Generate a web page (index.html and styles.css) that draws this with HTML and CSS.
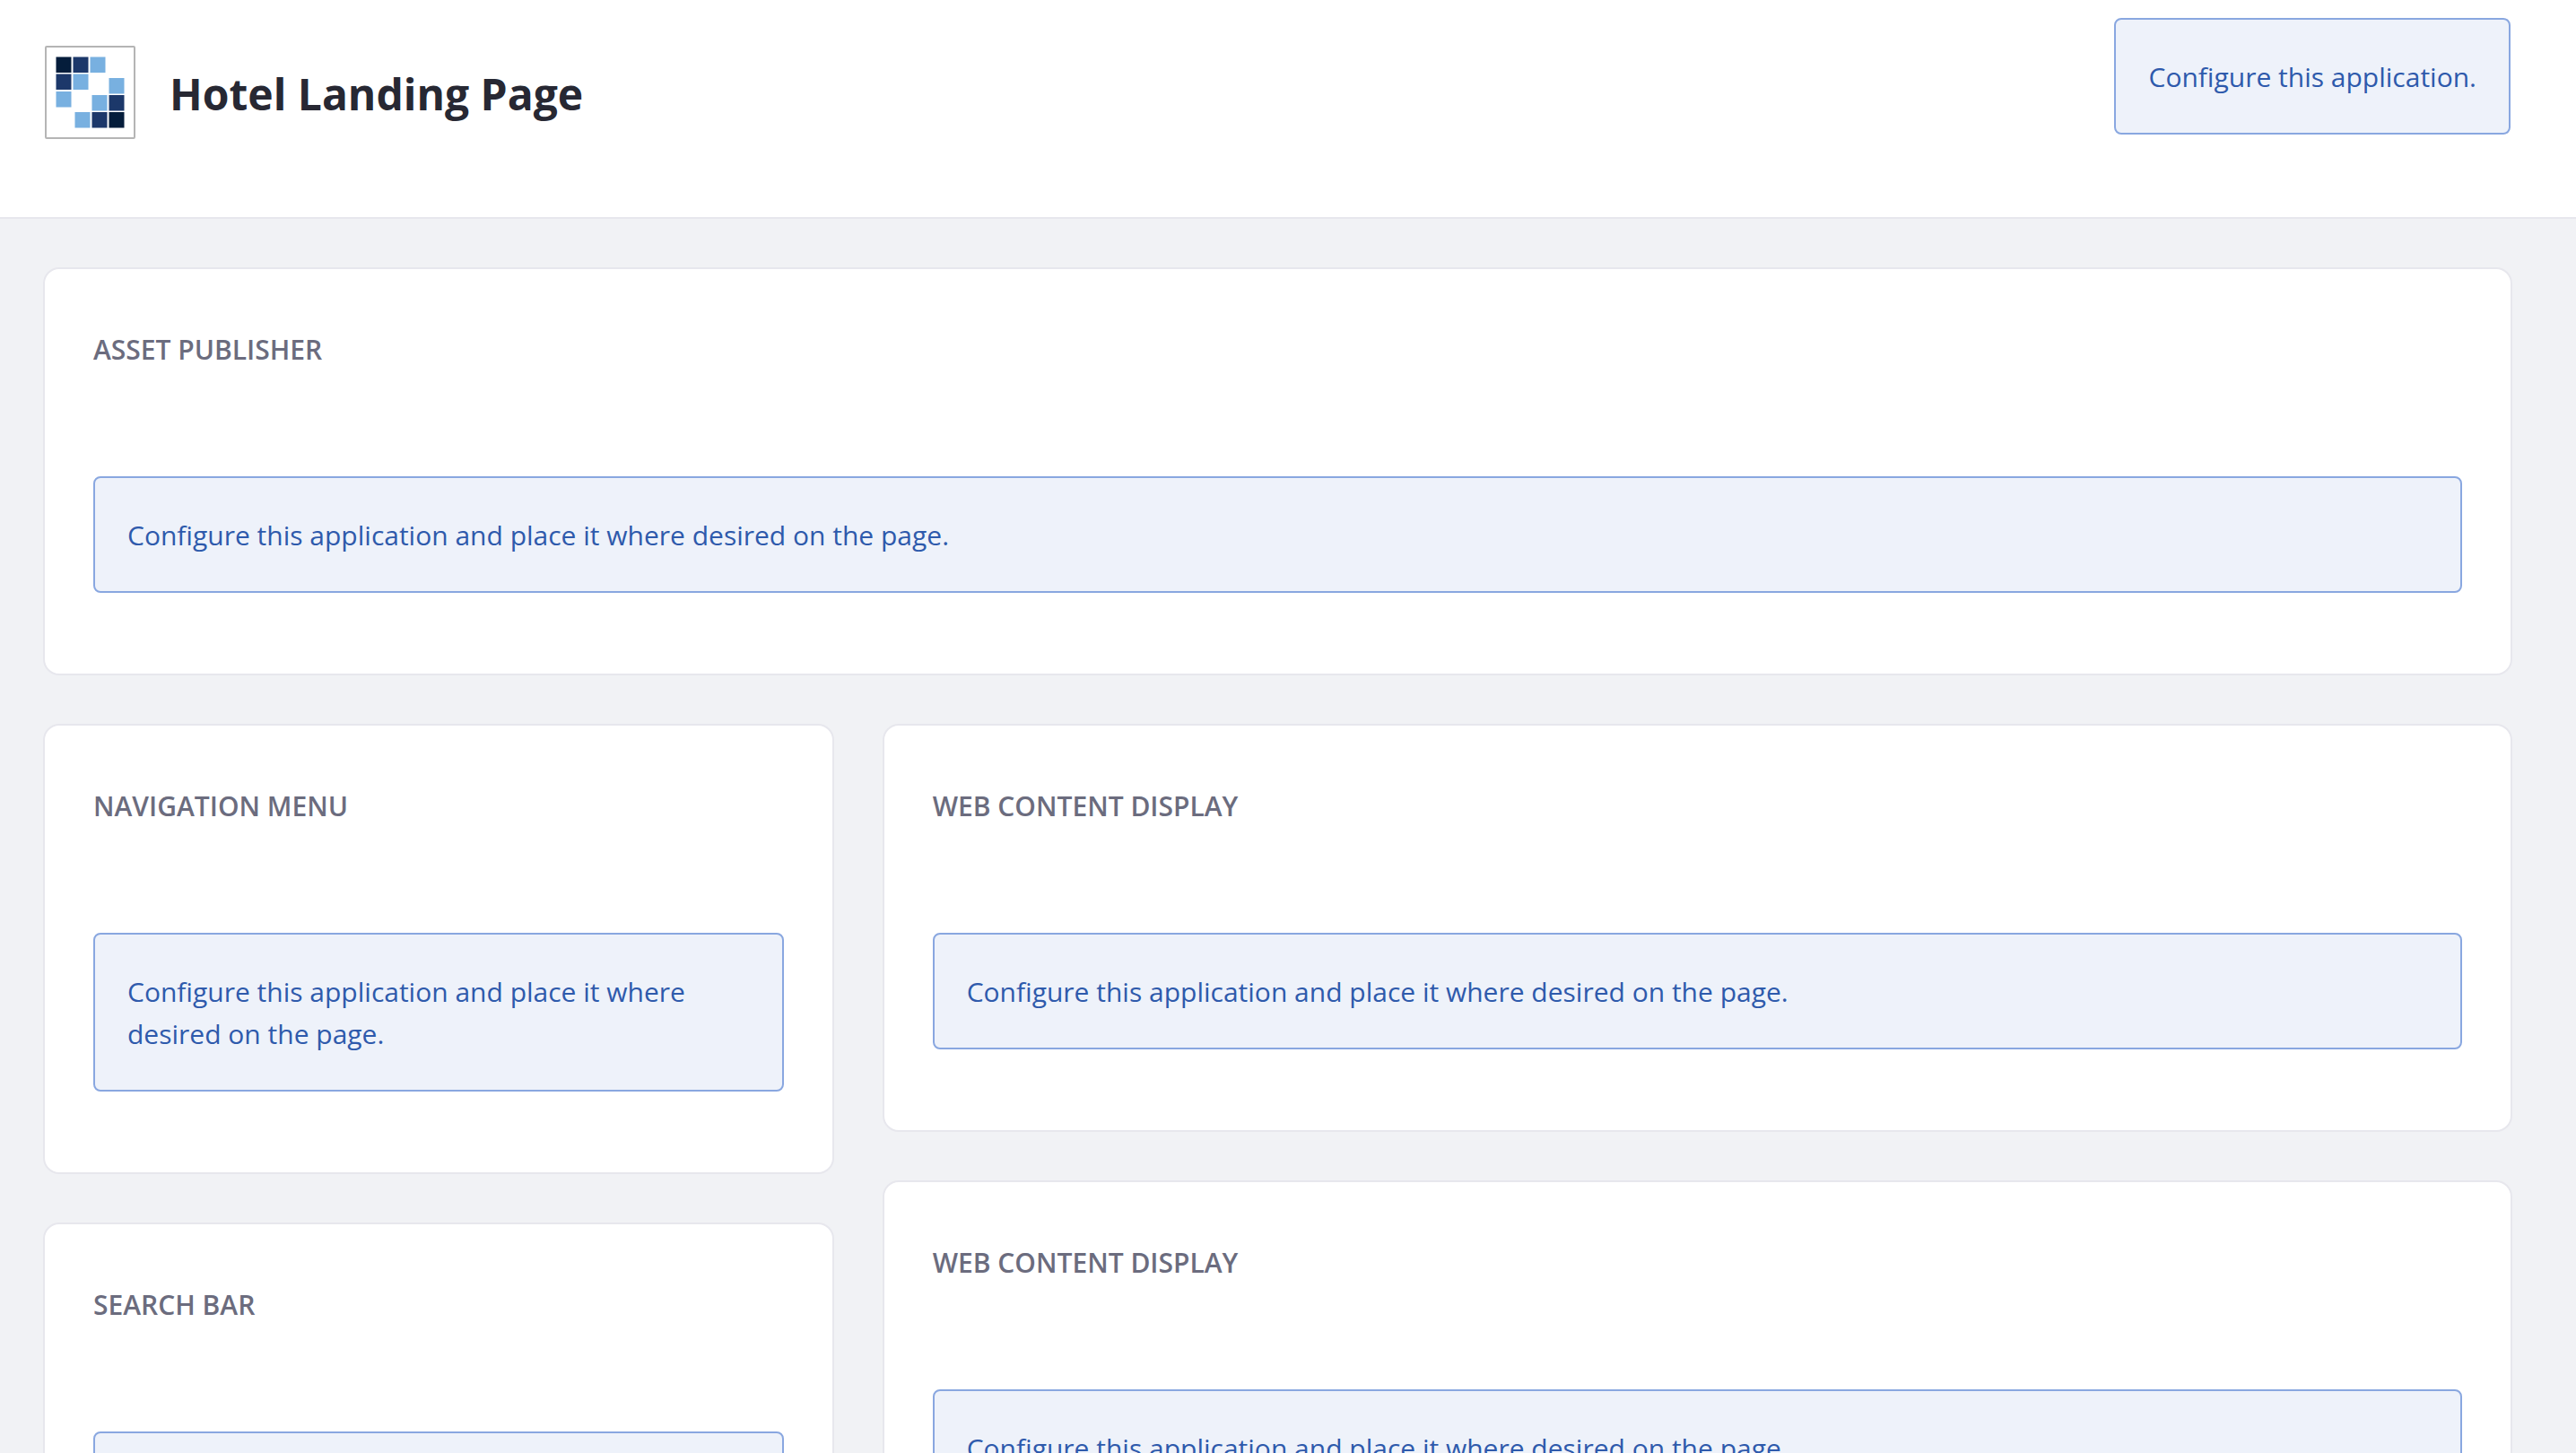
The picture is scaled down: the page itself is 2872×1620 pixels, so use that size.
FILE: index.html
```html
<!DOCTYPE html>
<html lang="en">
<head>
<meta charset="utf-8">
<meta name="viewport" content="width=device-width, initial-scale=1">
<title>Hotel Landing Page</title>
<link rel="stylesheet" href="styles.css">
</head>
<body>
<header class="site-header">
  <div class="brand">
    <svg class="logo" viewBox="0 0 101 104" aria-hidden="true">
      <rect x="1" y="1" width="99" height="102" rx="1" fill="#fff" stroke="#b5b5b5" stroke-width="2"/>
      <g fill="#051d3b">
        <rect x="12.5" y="12.5" width="17" height="17.5"/>
        <rect x="71.5" y="74" width="17" height="17.5"/>
      </g>
      <g fill="#1c386a">
        <rect x="31.5" y="12.5" width="17" height="17.5"/>
        <rect x="12.5" y="31.5" width="17" height="17.5"/>
        <rect x="71.5" y="55" width="17" height="17.5"/>
        <rect x="52.5" y="74" width="17" height="17.5"/>
      </g>
      <g fill="#78b0e0">
        <rect x="50.5" y="12.5" width="17" height="17.5"/>
        <rect x="31.5" y="31.5" width="17" height="17.5"/>
        <rect x="12.5" y="51" width="17" height="17.5"/>
        <rect x="71.5" y="36" width="17" height="17.5"/>
        <rect x="52.5" y="55" width="17" height="17.5"/>
        <rect x="33.5" y="74" width="17" height="17.5"/>
      </g>
    </svg>
    <h1 class="site-title">Hotel Landing Page</h1>
  </div>
  <p class="alert">Configure this application.</p>
</header>
<main class="layout">
  <section class="card card-wide">
    <h2 class="card-title">Asset Publisher</h2>
    <p class="alert">Configure this application and place it where desired on the page.</p>
  </section>
  <div class="column column-side">
    <section class="card">
      <h2 class="card-title">Navigation Menu</h2>
      <p class="alert">Configure this application and place it where desired on the page.</p>
    </section>
    <section class="card">
      <h2 class="card-title">Search Bar</h2>
      <p class="alert">Configure this application and place it where desired on the page.</p>
    </section>
  </div>
  <div class="column column-main">
    <section class="card">
      <h2 class="card-title">Web Content Display</h2>
      <p class="alert">Configure this application and place it where desired on the page.</p>
    </section>
    <section class="card">
      <h2 class="card-title">Web Content Display</h2>
      <p class="alert">Configure this application and place it where desired on the page.</p>
    </section>
  </div>
</main>
</body>
</html>
```
FILE: styles.css
```css
* {
  box-sizing: border-box;
}

body {
  margin: 0;
  min-height: 100vh;
  background: #f1f2f5;
  color: #272833;
  font-family: "Open Sans", "Noto Sans", sans-serif;
  font-size: 30px;
  line-height: 47px;
}

h1,
h2,
p {
  margin: 0;
}

.site-header {
  display: flex;
  align-items: flex-start;
  justify-content: space-between;
  padding: 20px 73px 87px 50px;
  background: #fff;
  border-bottom: 2px solid #e7e7ed;
}

.brand {
  display: flex;
  align-items: flex-end;
  gap: 38px;
  padding-top: 31px;
}

.logo {
  display: block;
  flex: none;
  width: 101px;
  height: 104px;
}

.site-title {
  font-size: 48px;
  font-weight: 700;
  line-height: 100px;
}

.layout {
  display: grid;
  grid-template-columns: repeat(12, minmax(0, 1fr));
  gap: 54px;
  align-items: start;
  padding: 54px 71px 54px 48px;
}

.card-wide {
  grid-column: span 12;
}

.column {
  display: flex;
  flex-direction: column;
  gap: 54px;
}

.column-side {
  grid-column: span 4;
}

.column-main {
  grid-column: span 8;
}

.card {
  padding: 66px 54px 90px;
  background: #fff;
  border: 2px solid #e7e7ed;
  border-radius: 18px;
}

.card-title {
  margin-bottom: 118px;
  color: #6b6c7e;
  font-size: 30px;
  font-weight: 600;
  line-height: 47px;
  text-transform: uppercase;
}

.alert {
  padding: 40px 36px 39px;
  background: #eef2fa;
  border: 2px solid #89a7e0;
  border-radius: 8px;
  color: #2e5aac;
}
```
